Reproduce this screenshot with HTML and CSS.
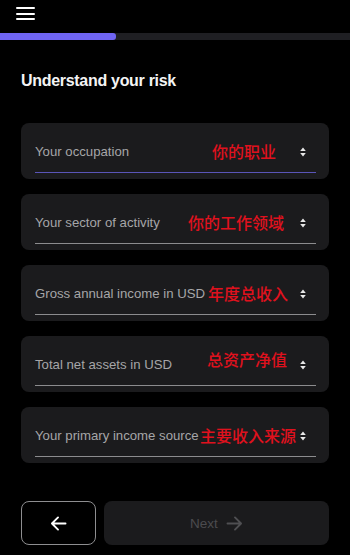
FILE: index.html
```html
<!DOCTYPE html>
<html lang="en">
<head>
<meta charset="utf-8">
<title>Understand your risk</title>
<link rel="stylesheet" href="styles.css">
</head>
<body>
<header class="topbar">
  <button class="menu" aria-label="Menu">
    <span></span><span></span><span></span>
  </button>
</header>
<div class="progress"><div class="progress-fill" style="width:33.2%"></div></div>
<main class="content">
  <h1 class="title">Understand your risk</h1>
  <form class="fields">
    <div class="card">
      <div class="field field-active">
        <span class="label">Your occupation</span>
        <span class="note note-1">你的职业</span>
        <svg class="chev" viewBox="0 0 6 10" width="6" height="10"><path d="M3 0.5 L5.8 4 H0.2 Z M3 9.5 L5.8 6 H0.2 Z" fill="#e8e8e8"/></svg>
      </div>
    </div>
    <div class="card">
      <div class="field">
        <span class="label">Your sector of activity</span>
        <span class="note note-2">你的工作领域</span>
        <svg class="chev" viewBox="0 0 6 10" width="6" height="10"><path d="M3 0.5 L5.8 4 H0.2 Z M3 9.5 L5.8 6 H0.2 Z" fill="#e8e8e8"/></svg>
      </div>
    </div>
    <div class="card">
      <div class="field">
        <span class="label">Gross annual income in USD</span>
        <span class="note note-3">年度总收入</span>
        <svg class="chev" viewBox="0 0 6 10" width="6" height="10"><path d="M3 0.5 L5.8 4 H0.2 Z M3 9.5 L5.8 6 H0.2 Z" fill="#e8e8e8"/></svg>
      </div>
    </div>
    <div class="card">
      <div class="field">
        <span class="label">Total net assets in USD</span>
        <span class="note note-4">总资产净值</span>
        <svg class="chev" viewBox="0 0 6 10" width="6" height="10"><path d="M3 0.5 L5.8 4 H0.2 Z M3 9.5 L5.8 6 H0.2 Z" fill="#e8e8e8"/></svg>
      </div>
    </div>
    <div class="card">
      <div class="field">
        <span class="label">Your primary income source</span>
        <span class="note note-5">主要收入来源</span>
        <svg class="chev" viewBox="0 0 6 10" width="6" height="10"><path d="M3 0.5 L5.8 4 H0.2 Z M3 9.5 L5.8 6 H0.2 Z" fill="#e8e8e8"/></svg>
      </div>
    </div>
  </form>
  <div class="actions">
    <button class="btn-back" aria-label="Back">
      <svg viewBox="0 0 18 16" width="17" height="15"><path d="M16.5 8 H2 M8.5 1.5 L2 8 L8.5 14.5" fill="none" stroke="#ffffff" stroke-width="2" stroke-linecap="round" stroke-linejoin="round"/></svg>
    </button>
    <button class="btn-next" disabled>
      <span>Next</span>
      <svg viewBox="0 0 18 16" width="17" height="15"><path d="M1.5 8 H16 M9.5 1.5 L16 8 L9.5 14.5" fill="none" stroke="#4f4f52" stroke-width="2" stroke-linecap="round" stroke-linejoin="round"/></svg>
    </button>
  </div>
</main>
</body>
</html>
```
FILE: styles.css
```css
* { box-sizing: border-box; }
html, body {
  margin: 0;
  padding: 0;
  background: #000000;
  color: #ffffff;
  font-family: "Liberation Sans", Arial, "Noto Sans CJK SC", sans-serif;
}
body {
  width: 350px;
  height: 555px;
  overflow: hidden;
}
.topbar {
  height: 33px;
  padding: 7px 0 0 16px;
}
.menu {
  display: flex;
  flex-direction: column;
  gap: 3.5px;
  width: 19px;
  padding: 0;
  margin: 0;
  background: none;
  border: 0;
}
.menu span {
  display: block;
  height: 2px;
  width: 19px;
  background: #ffffff;
  border-radius: 1px;
}
.progress {
  height: 7px;
  background: #1f1f23;
}
.progress-fill {
  height: 100%;
  background: #6f64f2;
  border-radius: 0 3px 3px 0;
}
.content {
  padding: 0 21px;
}
.title {
  margin: 31px 0 0;
  font-size: 16px;
  font-weight: 700;
  line-height: 20px;
  letter-spacing: -0.3px;
  color: #f4f4f4;
}
.fields {
  display: flex;
  flex-direction: column;
  gap: 15px;
  margin-top: 32px;
}
.card {
  height: 56px;
  background: #1b1b1d;
  border-radius: 8px;
  padding: 0 13px 0 14px;
}
.field {
  position: relative;
  display: flex;
  align-items: center;
  height: 50px;
  padding-top: 8px;
  border-bottom: 1.5px solid #8c8c8e;
}
.field-active {
  border-bottom-color: #5a55b8;
}
.label {
  font-size: 13.2px;
  color: #a6a6a8;
  white-space: nowrap;
}
.chev {
  margin-left: auto;
  margin-right: 10px;
  flex: none;
}
.note {
  position: absolute;
  top: 19px;
  font-family: "Noto Sans CJK SC", sans-serif;
  font-size: 16px;
  line-height: 18px;
  font-weight: 500;
  color: #e0111d;
  white-space: nowrap;
}
.note-1 { left: 177px; }
.note-2 { left: 153px; }
.note-3 { left: 173px; }
.note-4 { left: 172px; top: 14px; }
.note-5 { left: 165px; }
.actions {
  display: flex;
  gap: 8px;
  margin-top: 38px;
}
.btn-back {
  width: 75px;
  height: 44px;
  background: #000000;
  border: 1px solid #8e8e90;
  border-radius: 8px;
  display: flex;
  align-items: center;
  justify-content: center;
  padding: 0;
}
.btn-next {
  flex: 1;
  height: 44px;
  background: #1b1b1d;
  border: 0;
  border-radius: 8px;
  display: flex;
  align-items: center;
  justify-content: center;
  gap: 8px;
  padding: 0;
  font-family: "Liberation Sans", Arial, sans-serif;
  font-size: 13.5px;
  color: #4b4b4e;
}
```
